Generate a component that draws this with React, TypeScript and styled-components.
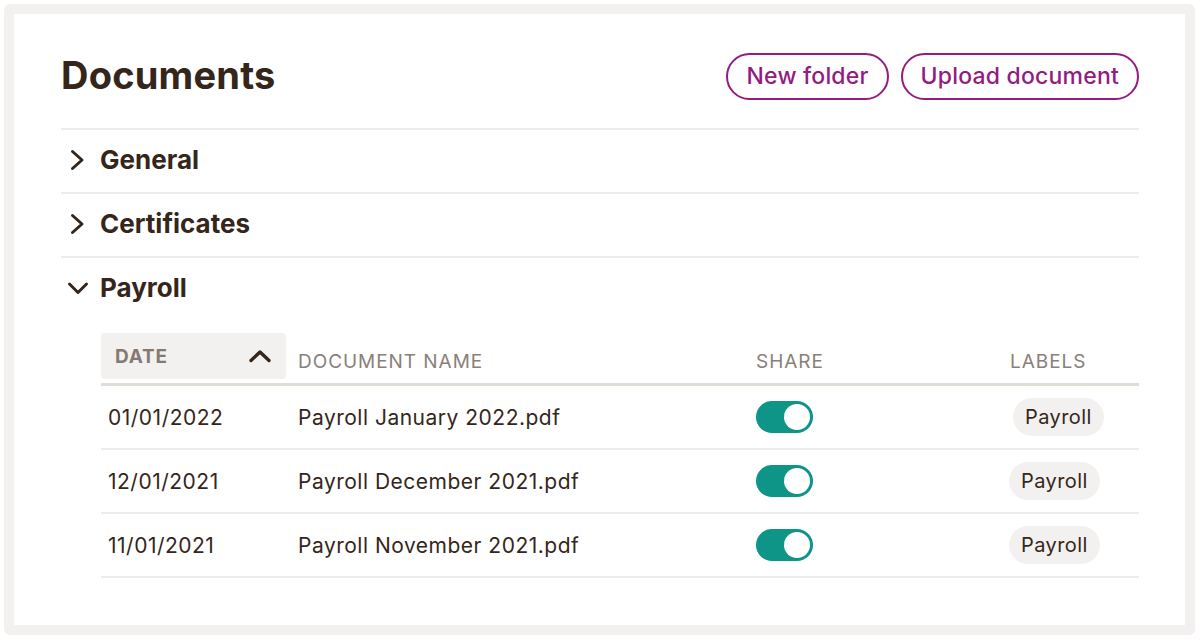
import React from "react";
import styled, {createGlobalStyle} from "styled-components";

const GlobalStyle = createGlobalStyle`
    body {
        margin: 0;
        background: #ffffff;
        font-family: Inter, "Noto Sans", sans-serif;
        color: #35261b;
    }
`;

const StyledFrame = styled.div`
    box-sizing: border-box;
    width: 1191px;
    height: 631px;
    margin: 4px 0 0 4px;
    padding: 10px;
    background: #f2f1ef;
    border-radius: 6px;
`;

const StyledCard = styled.div`
    box-sizing: border-box;
    height: 100%;
    background: #ffffff;
    padding: 8px 46px 0 47px;
`;

const StyledHeader = styled.div`
    display: flex;
    align-items: center;
    justify-content: space-between;
    height: 106px;
    border-bottom: 2px solid #eeece8;
`;

const StyledTitle = styled.h1`
    margin: 0;
    font-size: 38px;
    font-weight: 700;
    letter-spacing: 0.2px;
    color: #35261b;
`;

const StyledActions = styled.div`
    display: flex;
    gap: 12px;
    margin-top: 2px;
`;

const StyledButton = styled.button`
    box-sizing: border-box;
    height: 47px;
    padding: 0 18px;
    border: 2.5px solid #941c80;
    border-radius: 24px;
    background: #ffffff;
    color: #941c80;
    font-family: Inter, sans-serif;
    font-size: 23px;
    font-weight: 450;
    letter-spacing: 0.2px;
    cursor: pointer;
`;

const StyledSection = styled.div<{ $last?: boolean }>`
    border-bottom: ${props => props.$last ? "none" : "2px solid #eeece8"};
`;

const StyledSectionHead = styled.div`
    display: flex;
    align-items: center;
    box-sizing: border-box;
    height: 62px;
    gap: 11px;
    padding: 0 0 3px 6px;
    font-size: 26px;
    font-weight: 700;
    color: #35261b;
`;

const StyledChevronBox = styled.span`
    display: inline-flex;
    align-items: center;
    justify-content: center;
    width: 22px;
    height: 22px;
`;

const StyledTable = styled.div`
    margin: 13px 0 0 40px;
`;

const StyledHeadRow = styled.div`
    display: grid;
    grid-template-columns: 185px 458px 254px 1fr;
    align-items: end;
    padding-bottom: 4px;
    border-bottom: 3px solid #e0ddd7;
`;

const StyledHeadCell = styled.div`
    padding: 0 0 6px 12px;
    font-size: 19px;
    line-height: 22px;
    letter-spacing: 0.95px;
    color: #8a8079;
    text-transform: uppercase;
`;

const StyledSortCell = styled.div`
    display: flex;
    align-items: center;
    justify-content: space-between;
    box-sizing: border-box;
    height: 46px;
    padding: 0 14px 0 14px;
    background: #f2f1ef;
    border-radius: 4px;
    font-size: 19px;
    font-weight: 700;
    letter-spacing: 0.8px;
    color: #857a72;
`;

const StyledRow = styled.div`
    display: grid;
    grid-template-columns: 185px 458px 254px 1fr;
    align-items: center;
    height: 62px;
    border-bottom: 2px solid #eeece8;
    font-size: 21px;
    color: #35261b;
`;

const StyledCell = styled.div<{ $pad?: number }>`
    padding-left: ${props => props.$pad ?? 12}px;
    letter-spacing: 0.5px;
`;

const StyledToggle = styled.span<{ $on: boolean }>`
    position: relative;
    display: inline-block;
    width: 57px;
    height: 32px;
    border-radius: 16px;
    background: ${props => props.$on ? "#0f9488" : "#d9d5cf"};
    vertical-align: middle;

    &::after {
        content: "";
        position: absolute;
        top: 3px;
        left: ${props => props.$on ? "28px" : "3px"};
        width: 26px;
        height: 26px;
        border-radius: 50%;
        background: #ffffff;
    }
`;

const StyledLabel = styled.span`
    display: inline-flex;
    align-items: center;
    height: 38px;
    padding: 0 12px;
    border-radius: 19px;
    background: #f2f1ef;
    font-size: 20px;
    letter-spacing: 0.4px;
    color: #35261b;
`;

function Chevron({dir}: { dir: "right" | "down" }) {
    const points = dir === "down" ? "2.5,7 11,15.5 19.5,7" : "5.5,2.5 15,11 5.5,19.5";
    return (
        <StyledChevronBox>
            <svg width="22" height="22" viewBox="0 0 22 22" fill="none">
                <polyline points={points} stroke="#35261b" strokeWidth="3"
                          strokeLinecap="round" strokeLinejoin="round"/>
            </svg>
        </StyledChevronBox>
    );
}

function SortUp() {
    return (
        <svg width="24" height="14" viewBox="0 0 24 14" fill="none">
            <polyline points="3,11.5 12,3 21,11.5" stroke="#35261b" strokeWidth="3.4"
                      strokeLinecap="round" strokeLinejoin="round"/>
        </svg>
    );
}

const documents = [
    {date: "01/01/2022", name: "Payroll January 2022.pdf", shared: true, label: "Payroll", offset: 4},
    {date: "12/01/2021", name: "Payroll December 2021.pdf", shared: true, label: "Payroll", offset: 0},
    {date: "11/01/2021", name: "Payroll November 2021.pdf", shared: true, label: "Payroll", offset: 0},
];

export default function App() {
    return (
        <>
            <GlobalStyle/>
            <StyledFrame>
                <StyledCard>
                    <StyledHeader>
                        <StyledTitle>Documents</StyledTitle>
                        <StyledActions>
                            <StyledButton>New folder</StyledButton>
                            <StyledButton>Upload document</StyledButton>
                        </StyledActions>
                    </StyledHeader>

                    <StyledSection>
                        <StyledSectionHead><Chevron dir="right"/>General</StyledSectionHead>
                    </StyledSection>
                    <StyledSection>
                        <StyledSectionHead><Chevron dir="right"/>Certificates</StyledSectionHead>
                    </StyledSection>
                    <StyledSection $last>
                        <StyledSectionHead><Chevron dir="down"/>Payroll</StyledSectionHead>
                        <StyledTable>
                            <StyledHeadRow>
                                <StyledSortCell>DATE<SortUp/></StyledSortCell>
                                <StyledHeadCell>Document name</StyledHeadCell>
                                <StyledHeadCell>Share</StyledHeadCell>
                                <StyledHeadCell>Labels</StyledHeadCell>
                            </StyledHeadRow>
                            {documents.map(doc => (
                                <StyledRow key={doc.name}>
                                    <StyledCell $pad={7}>{doc.date}</StyledCell>
                                    <StyledCell>{doc.name}</StyledCell>
                                    <StyledCell><StyledToggle $on={doc.shared}/></StyledCell>
                                    <StyledCell $pad={11 + doc.offset}><StyledLabel>{doc.label}</StyledLabel></StyledCell>
                                </StyledRow>
                            ))}
                        </StyledTable>
                    </StyledSection>
                </StyledCard>
            </StyledFrame>
        </>
    );
}
